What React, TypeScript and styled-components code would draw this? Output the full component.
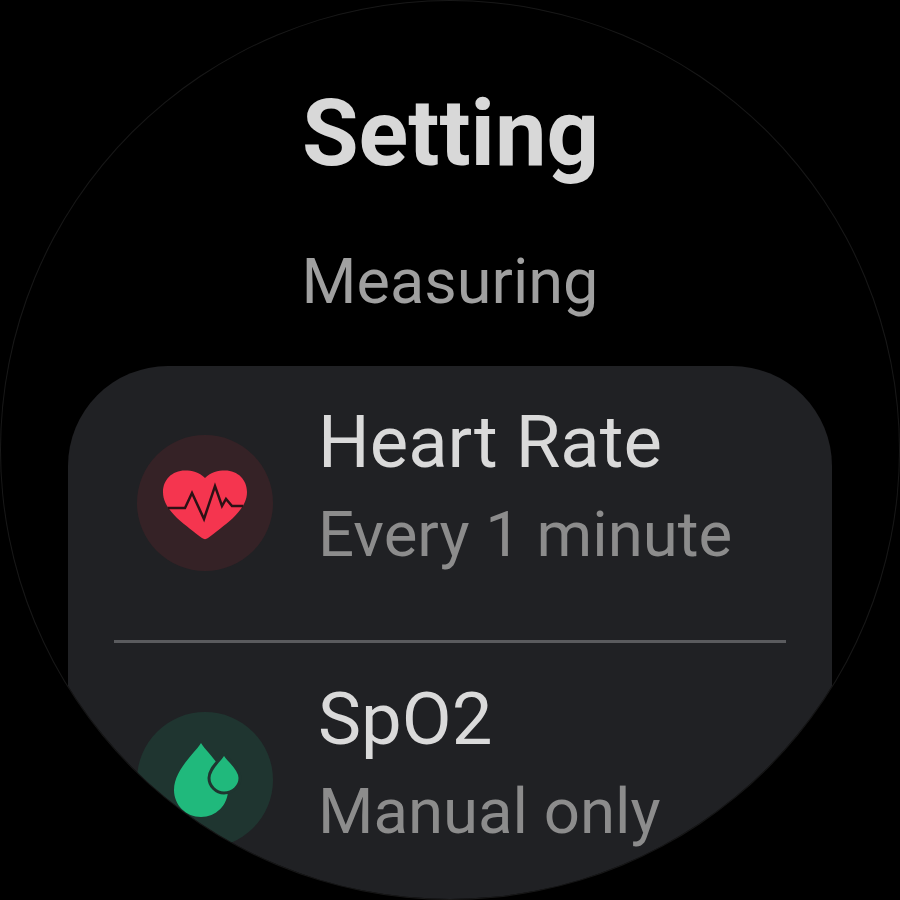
import React from "react";
import styled, { createGlobalStyle } from "styled-components";

const GlobalStyle = createGlobalStyle`
  html, body {
    margin: 0;
    padding: 0;
    background: #000;
  }
  body {
    font-family: Roboto, "Noto Sans", sans-serif;
  }
`;

const Screen = styled.div`
  width: 898px;
  height: 898px;
  margin: 1px;
  border-radius: 50%;
  box-shadow: 0 0 0 1px #181818;
  overflow: hidden;
  background: #000;
  display: flex;
  flex-direction: column;
  align-items: center;
  filter: blur(0.5px);
`;

const Title = styled.h1`
  margin: 83px 0 0 1px;
  font-size: 92px;
  line-height: 100px;
  font-weight: 700;
  color: #d8d8d8;
`;

const Subtitle = styled.h2`
  margin: 63px 0 0;
  font-size: 63px;
  line-height: 70px;
  font-weight: 400;
  color: #a0a0a0;
`;

const Card = styled.section`
  margin-top: 49px;
  width: 764px;
  flex: 1 0 auto;
  box-sizing: border-box;
  background: #202124;
  border-radius: 100px 100px 0 0;
  padding: 0 46px;
`;

const Row = styled.div`
  height: 274px;
  display: flex;
  align-items: center;
  gap: 45px;
  padding-left: 23px;
`;

const Divider = styled.hr`
  margin: 0;
  border: 0;
  height: 3px;
  background: #5a5b5e;
`;

const IconCircle = styled.div<{ $tint: string }>`
  width: 136px;
  height: 136px;
  flex: none;
  border-radius: 50%;
  background: ${(props) => props.$tint};

  svg {
    display: block;
  }
`;

const Texts = styled.div`
  display: flex;
  flex-direction: column;
  gap: 18px;
  padding-bottom: 32px;
`;

const ItemName = styled.div`
  font-size: 72.5px;
  line-height: 78px;
  color: #dadada;
`;

const ItemValue = styled.div`
  font-size: 63.5px;
  line-height: 70px;
  color: #8c8c8c;
`;

const HeartIcon = () => (
  <svg width="136" height="136" viewBox="0 0 136 136">
    <path
      fill="#f5354f"
      d="M68 43C62 37 55 35.5 48 35.5C35 35.5 26 45 26 57C26 67 32 75 40 83C48 90 58 98 65 103C67 104.5 69 104.5 71 103C78 98 88 90 96 83C104 75 110 67 110 57C110 45 101 35.5 88 35.5C81 35.5 74 37 68 43Z"
    />
    <polyline
      fill="none"
      stroke="#2c1115"
      strokeWidth="2.5"
      points="31,73 48,73 55,58 67,84 78,51 85,71 89,64 95,71 106,71"
    />
  </svg>
);

const DropsIcon = () => (
  <svg width="136" height="136" viewBox="0 0 136 136">
    <path
      fill="#20b97c"
      d="M64 31C58 41 37 58 37 78C37 93 49 105 64 105C79 105 91 93 91 78C91 58 70 41 64 31Z"
    />
    <path
      fill="#20b97c"
      stroke="#1f3530"
      strokeWidth="3"
      d="M87 41C83 49 72 56 72 66C72 74 79 81 87 81C96 81 103 74 103 66C103 56 91 49 87 41Z"
    />
  </svg>
);

export default function App() {
  return (
    <>
      <GlobalStyle />
      <Screen>
        <Title>Setting</Title>
        <Subtitle>Measuring</Subtitle>
        <Card>
          <Row>
            <IconCircle $tint="#352226">
              <HeartIcon />
            </IconCircle>
            <Texts>
              <ItemName>Heart Rate</ItemName>
              <ItemValue>Every 1 minute</ItemValue>
            </Texts>
          </Row>
          <Divider />
          <Row>
            <IconCircle $tint="#1f3530">
              <DropsIcon />
            </IconCircle>
            <Texts>
              <ItemName>SpO2</ItemName>
              <ItemValue>Manual only</ItemValue>
            </Texts>
          </Row>
        </Card>
      </Screen>
    </>
  );
}
